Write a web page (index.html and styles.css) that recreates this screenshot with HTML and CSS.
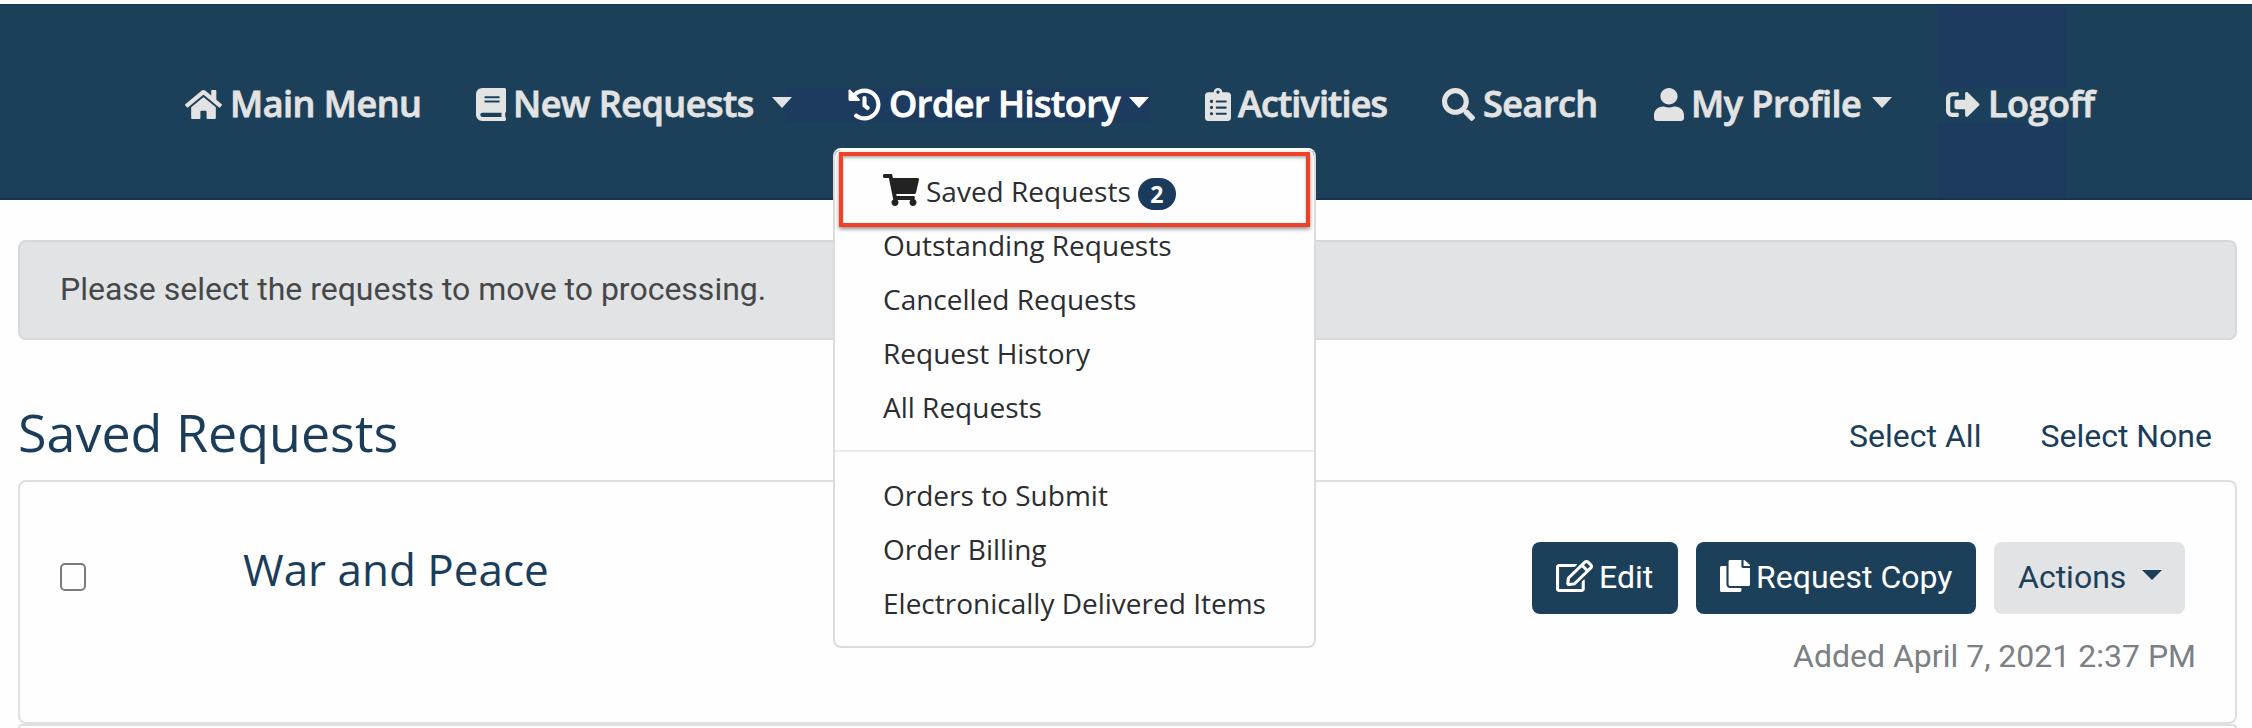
FILE: index.html
```html
<!DOCTYPE html>
<html lang="en">
<head>
<meta charset="utf-8">
<title>Saved Requests</title>
<link rel="stylesheet" href="styles.css">
</head>
<body>
<nav class="navbar">
  <ul class="nav">
    <li class="nav-item"><svg class="icon icon-home" viewBox="0 0 576 512" preserveAspectRatio="none"><path d="M280.37 148.26L96 300.11V464a16 16 0 0 0 16 16l112.06-.29a16 16 0 0 0 15.92-16V368a16 16 0 0 1 16-16h64a16 16 0 0 1 16 16v95.64a16 16 0 0 0 16 16.05L464 480a16 16 0 0 0 16-16V300L295.67 148.26a12.19 12.19 0 0 0-15.3 0zM571.6 251.47L488 182.56V44.05a12 12 0 0 0-12-12h-56a12 12 0 0 0-12 12v72.61L318.47 43a48 48 0 0 0-61 0L4.34 251.47a12 12 0 0 0-1.6 16.9l25.5 31A12 12 0 0 0 45.15 301l235.22-193.74a12.19 12.19 0 0 1 15.3 0L530.9 301a12 12 0 0 0 16.9-1.6l25.5-31a12 12 0 0 0-1.7-16.93z"/></svg><span class="label">Main Menu</span></li>
    <li class="nav-item"><svg class="icon icon-book" viewBox="0 0 448 512" preserveAspectRatio="none"><path d="M448 360V24c0-13.3-10.7-24-24-24H96C43 0 0 43 0 96v320c0 53 43 96 96 96h328c13.3 0 24-10.7 24-24v-16c0-7.5-3.5-14.3-8.9-18.7-4.2-15.4-4.2-59.3 0-74.7 5.4-4.3 8.9-11.1 8.9-18.6zM128 134c0-3.3 2.7-6 6-6h212c3.3 0 6 2.7 6 6v20c0 3.3-2.7 6-6 6H134c-3.3 0-6-2.7-6-6v-20zm0 64c0-3.3 2.7-6 6-6h212c3.3 0 6 2.7 6 6v20c0 3.3-2.7 6-6 6H134c-3.3 0-6-2.7-6-6v-20zm253.4 250H96c-17.7 0-32-14.3-32-32 0-17.6 14.4-32 32-32h285.4c-1.9 17.1-1.9 46.9 0 64z"/></svg><span class="label">New Requests</span><span class="caret"></span></li>
    <li class="nav-item active"><svg class="icon icon-history" viewBox="0 0 512 512" preserveAspectRatio="none"><path d="M504 255.531c.253 136.64-111.18 248.372-247.82 248.468-59.015.042-113.223-20.53-155.822-54.911-11.077-8.94-11.905-25.541-1.839-35.607l11.267-11.267c8.609-8.609 22.353-9.551 31.891-1.984C173.062 425.135 212.781 440 256 440c101.705 0 184-82.311 184-184 0-101.705-82.311-184-184-184-48.814 0-93.149 18.969-126.068 49.932l50.754 50.754c10.08 10.08 2.941 27.314-11.313 27.314H24c-8.837 0-16-7.163-16-16V38.627c0-14.254 17.234-21.393 27.314-11.314l49.372 49.372C129.209 34.136 189.552 8 256 8c136.81 0 247.747 110.78 248 247.531zm-180.912 78.784l9.823-12.63c8.138-10.463 6.253-25.542-4.21-33.679L288 256.349V152c0-13.255-10.745-24-24-24h-16c-13.255 0-24 10.745-24 24v135.651l65.409 50.874c10.463 8.137 25.541 6.253 33.679-4.21z"/></svg><span class="label">Order History</span><span class="caret"></span></li>
    <li class="nav-item"><svg class="icon icon-list" viewBox="0 0 384 512" preserveAspectRatio="none"><path d="M336 64h-80c0-35.3-28.7-64-64-64s-64 28.7-64 64H48C21.5 64 0 85.5 0 112v352c0 26.5 21.5 48 48 48h288c26.5 0 48-21.5 48-48V112c0-26.5-21.5-48-48-48zM96 424c-13.3 0-24-10.7-24-24s10.7-24 24-24 24 10.7 24 24-10.7 24-24 24zm0-96c-13.3 0-24-10.7-24-24s10.7-24 24-24 24 10.7 24 24-10.7 24-24 24zm0-96c-13.3 0-24-10.7-24-24s10.7-24 24-24 24 10.7 24 24-10.7 24-24 24zm96-192c13.3 0 24 10.7 24 24s-10.7 24-24 24-24-10.7-24-24 10.7-24 24-24zm128 368c0 4.4-3.6 8-8 8H168c-4.4 0-8-3.6-8-8v-16c0-4.4 3.6-8 8-8h144c4.4 0 8 3.6 8 8v16zm0-96c0 4.4-3.6 8-8 8H168c-4.4 0-8-3.6-8-8v-16c0-4.4 3.6-8 8-8h144c4.4 0 8 3.6 8 8v16zm0-96c0 4.4-3.6 8-8 8H168c-4.4 0-8-3.6-8-8v-16c0-4.4 3.6-8 8-8h144c4.4 0 8 3.6 8 8v16z"/></svg><span class="label label-tight">Activities</span></li>
    <li class="nav-item"><svg class="icon icon-search" viewBox="0 0 512 512" preserveAspectRatio="none"><path d="M505 442.7L405.3 343c-4.5-4.5-10.6-7-17-7H372c27.6-35.3 44-79.7 44-128C416 93.1 322.9 0 208 0S0 93.1 0 208s93.1 208 208 208c48.3 0 92.7-16.4 128-44v16.3c0 6.4 2.5 12.5 7 17l99.7 99.7c9.4 9.4 24.6 9.4 33.9 0l28.3-28.3c9.4-9.4 9.4-24.6.1-34zM208 336c-70.7 0-128-57.2-128-128 0-70.7 57.2-128 128-128 70.7 0 128 57.2 128 128 0 70.7-57.2 128-128 128z"/></svg><span class="label">Search</span></li>
    <li class="nav-item"><svg class="icon icon-user" viewBox="0 0 448 512" preserveAspectRatio="none"><path d="M224 256c70.7 0 128-57.3 128-128S294.7 0 224 0 96 57.3 96 128s57.3 128 128 128zm89.6 32h-16.7c-22.2 10.2-46.9 16-72.9 16s-50.6-5.8-72.9-16h-16.7C60.2 288 0 348.2 0 422.4V464c0 26.5 21.5 48 48 48h352c26.5 0 48-21.5 48-48v-41.6c0-74.2-60.2-134.4-134.4-134.4z"/></svg><span class="label">My Profile</span><span class="caret"></span></li>
    <li class="nav-item"><svg class="icon icon-logoff" viewBox="0 0 512 512" preserveAspectRatio="none"><path d="M497 273L329 441c-15 15-41 4.5-41-17v-96H152c-13.3 0-24-10.7-24-24v-96c0-13.3 10.7-24 24-24h136V88c0-21.4 25.9-32 41-17l168 168c9.3 9.4 9.3 24.6 0 34zM192 436v-40c0-6.6-5.4-12-12-12H96c-17.7 0-32-14.3-32-32V160c0-17.7 14.3-32 32-32h84c6.6 0 12-5.4 12-12V76c0-6.6-5.4-12-12-12H96c-53 0-96 43-96 96v192c0 53 43 96 96 96h84c6.6 0 12-5.4 12-12z"/></svg><span class="label">Logoff</span></li>
  </ul>
  <div class="menu">
    <div class="menu-item menu-first"><svg class="icon-cart" viewBox="0 0 576 512" preserveAspectRatio="none"><path d="M528.12 301.319l47.273-208C578.806 78.301 567.391 64 551.99 64H159.208l-9.166-44.81C147.758 8.021 137.93 0 126.529 0H24C10.745 0 0 10.745 0 24v16c0 13.255 10.745 24 24 24h69.883l70.248 343.435C147.325 417.1 136 435.222 136 456c0 30.928 25.072 56 56 56s56-25.072 56-56c0-15.674-6.447-29.835-16.824-40h209.647C430.447 426.165 424 440.326 424 456c0 30.928 25.072 56 56 56s56-25.072 56-56c0-22.172-12.888-41.332-31.579-50.405l5.517-24.276c3.413-15.018-8.002-29.319-23.403-29.319H218.117l-6.545-32h293.145c11.206 0 20.92-7.754 23.403-18.681z"/></svg><span>Saved Requests</span><span class="badge">2</span></div>
    <div class="menu-item">Outstanding Requests</div>
    <div class="menu-item">Cancelled Requests</div>
    <div class="menu-item">Request History</div>
    <div class="menu-item">All Requests</div>
    <div class="divider"></div>
    <div class="menu-item">Orders to Submit</div>
    <div class="menu-item">Order Billing</div>
    <div class="menu-item">Electronically Delivered Items</div>
    <div class="highlight"></div>
  </div>
</nav>
<main class="content">
  <div class="alert">Please select the requests to move to processing.</div>
  <div class="heading-row">
    <h1 class="heading">Saved Requests</h1>
    <div class="select-links"><a>Select All</a><a>Select None</a></div>
  </div>
  <div class="card">
    <span class="checkbox"></span>
    <h2 class="title">War and Peace</h2>
    <div class="card-side">
      <div class="buttons">
        <div class="btn btn-edit"><svg class="icon-edit" viewBox="0 0 576 512" preserveAspectRatio="none"><path d="M402.3 344.9l32-32c5-5 13.7-1.5 13.7 5.7V464c0 26.5-21.5 48-48 48H48c-26.5 0-48-21.5-48-48V112c0-26.5 21.5-48 48-48h273.5c7.1 0 10.7 8.6 5.7 13.7l-32 32c-1.5 1.5-3.5 2.3-5.7 2.3H48v352h352V350.5c0-2.1.8-4.1 2.3-5.6zm156.6-201.8L296.3 405.7l-90.4 10c-26.2 2.9-48.5-19.2-45.6-45.6l10-90.4L432.9 17.1c22.9-22.9 59.9-22.9 82.7 0l43.2 43.2c22.9 22.9 22.9 60 .1 82.8zM460.1 174L402 115.9 216.2 301.8l-7.3 65.3 65.3-7.3L460.1 174zm64.8-79.7l-43.2-43.2c-4.1-4.1-10.8-4.1-14.8 0L436 82l58.1 58.1 30.9-30.9c4-4.2 4-10.8-.1-14.9z"/></svg><span>Edit</span></div>
        <div class="btn btn-copy"><svg class="icon-copy" viewBox="0 0 448 512" preserveAspectRatio="none"><path d="M320 448v40c0 13.255-10.745 24-24 24H24c-13.255 0-24-10.745-24-24V120c0-13.255 10.745-24 24-24h72v296c0 30.879 25.121 56 56 56h168zm0-344V0H152c-13.255 0-24 10.745-24 24v368c0 13.255 10.745 24 24 24h272c13.255 0 24-10.745 24-24V128H344c-13.2 0-24-10.8-24-24zm120.971-31.029L375.029 7.029A24 24 0 0 0 358.059 0H352v96h96v-6.059a24 24 0 0 0-7.029-16.97z"/></svg><span>Request Copy</span></div>
        <div class="btn btn-actions"><span>Actions</span><span class="caret caret-small"></span></div>
      </div>
      <div class="added">Added April 7, 2021 2:37 PM</div>
    </div>
  </div>
  <div class="card-next"></div>
</main>
</body>
</html>
```
FILE: styles.css
```css
* { box-sizing: border-box; }
body {
  margin: 0;
  padding-top: 4px;
  background: #fefefe;
  font-family: Roboto, sans-serif;
  font-size: 32px;
}
h1, h2, ul { margin: 0; padding: 0; }
svg { flex: none; fill: currentColor; display: block; }

/* Navigation */
.navbar {
  position: relative;
  height: 196px;
  border-top: 1px solid #17344f;
  border-bottom: 2px solid #17344f;
  background-color: #1d405a;
  background-image:
    linear-gradient(#1c3b5e, #1c3b5e),
    linear-gradient(#1c3b5e, #1c3b5e),
    linear-gradient(#1c3b5e, #1c3b5e);
  background-repeat: no-repeat;
  background-position: 1938px 0, 1938px 117px, 785px 83px;
  background-size: 128px 83px, 128px 77px, 365px 34px;
}
.nav {
  display: grid;
  grid-template-columns: 291px 372px 357px 237px 212px 292px 200px;
  align-items: center;
  height: 193px;
  padding-left: 185px;
  padding-top: 6px;
  list-style: none;
  font-family: "Open Sans", sans-serif;
  font-size: 36px;
  font-weight: 600;
  letter-spacing: -.5px;
  line-height: 52px;
  color: #e3e3e3;
}
.nav-item {
  display: flex;
  align-items: center;
  height: 52px;
  white-space: nowrap;
}
.active { color: #fff; }
.icon { height: 33px; }
.icon-home { width: 37px; margin-right: 8px; }
.icon-book { width: 30px; margin-right: 7px; }
.icon-history { width: 33px; margin-right: 8px; }
.icon-list { width: 26px; margin-right: 7px; }
.icon-search { width: 33px; margin-right: 8px; }
.icon-user { width: 30px; margin-right: 7px; }
.icon-logoff { width: 34px; margin-right: 8px; }
.label { padding-bottom: 2px; -webkit-text-stroke: .8px currentColor; }
.label-tight { letter-spacing: -.85px; }
.caret {
  width: 0;
  border: 10px solid transparent;
  border-top: 11px solid currentColor;
  border-bottom: 0;
  margin-left: auto;
  margin-bottom: 5px;
}
.nav-item:nth-child(2) .caret { margin-right: 56px; }
.nav-item:nth-child(3) .caret { margin-right: 56px; }
.nav-item:nth-child(6) .caret { margin-right: 54px; }

/* Dropdown, laid over the page */
.menu {
  position: absolute;
  z-index: 2;
  left: 833px;
  top: 143px;
  width: 483px;
  height: 500px;
  padding-top: 14px;
  border: 2px solid #dcdcdc;
  border-top-color: #fff;
  border-radius: 8px;
  background: #fefefe;
  background-clip: padding-box;
  font-family: "Open Sans", sans-serif;
  font-size: 28px;
  line-height: 54px;
  color: #2b2d30;
}
.menu-item {
  display: flex;
  align-items: center;
  height: 54px;
  padding-left: 48px;
  white-space: nowrap;
}
.icon-cart { width: 36px; height: 32px; margin: 0 7px 2px 0; color: #222; }
.badge {
  width: 38px;
  height: 32px;
  margin: 5px 0 0 7px;
  border-radius: 16px;
  background: #1b3b5c;
  color: #fff;
  font-size: 23px;
  font-weight: 700;
  line-height: 32px;
  text-align: center;
}
.divider { height: 2px; margin: 16px 0; background: #e9ecef; }
.highlight {
  position: absolute;
  left: 4px;
  top: 2px;
  width: 471px;
  height: 75px;
  border: 4px solid #ee4128;
  box-shadow: 0 2px 4px rgba(0, 0, 0, .45), inset 0 2px 3px rgba(0, 0, 0, .3);
}

/* Page content */
.content { padding: 40px 15px 0 18px; }
.alert {
  height: 100px;
  padding-left: 40px;
  border: 2px solid #d6d8db;
  border-radius: 8px;
  background: #e2e3e5;
  color: #464748;
  line-height: 94px;
}
.heading-row {
  display: flex;
  justify-content: space-between;
  height: 140px;
  color: #1b3d5a;
}
.heading {
  padding-top: 56px;
  font-family: "Open Sans", sans-serif;
  font-size: 52px;
  font-weight: 400;
  line-height: 72px;
}
.select-links {
  display: flex;
  gap: 59px;
  padding: 72px 25px 0 0;
  line-height: 48px;
}
.card {
  display: flex;
  height: 244px;
  border: 2px solid #dfdfdf;
  border-radius: 8px;
}
.checkbox {
  width: 26px;
  height: 28px;
  margin: 81px 157px 0 40px;
  border: 2px solid #7b7b7b;
  border-radius: 5px;
}
.title {
  padding-top: 57px;
  font-family: "Open Sans", sans-serif;
  font-size: 44px;
  font-weight: 400;
  line-height: 60px;
  color: #1b3d5a;
}
.card-side { margin: 60px 0 0 auto; }
.buttons { display: flex; gap: 18px; padding-right: 50px; }
.btn {
  display: flex;
  align-items: center;
  height: 72px;
  border-radius: 8px;
  background: #1d405a;
  color: #fff;
  white-space: nowrap;
}
.btn span:first-of-type { padding-bottom: 2px; }
.btn-edit { width: 146px; padding-left: 24px; }
.btn-copy { width: 280px; padding-left: 24px; }
.btn-actions { width: 191px; padding-left: 24px; background: #e2e3e5; color: #1d405a; }
.icon-edit { width: 37px; height: 32px; margin: 0 6px 4px 0; }
.icon-copy { width: 30px; height: 32px; margin: 0 6px 4px 0; }
.caret-small { border-width: 10px 10px 0; margin: 0 23px 6px auto; }
.added {
  padding: 18px 39px 0 0;
  color: #7b8085;
  line-height: 48px;
  text-align: right;
}
.card-next {
  height: 4px;
  border: 2px solid #dfdfdf;
  border-bottom: 0;
  border-radius: 8px 8px 0 0;
}
```
